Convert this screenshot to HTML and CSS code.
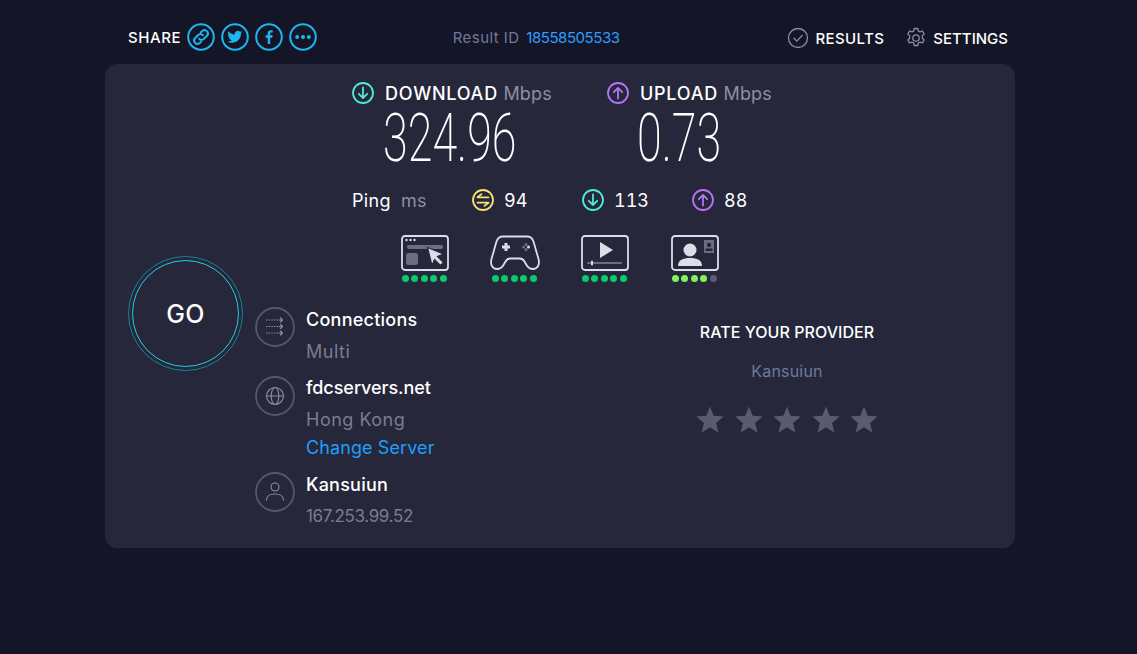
FILE: index.html
```html
<!DOCTYPE html>
<html lang="en">
<head>
<meta charset="utf-8">
<title>Speedtest result</title>
<link rel="stylesheet" href="styles.css">
</head>
<body>
<div class="page">
  <header class="topbar">
    <div class="share">
      <span class="share-label">SHARE</span>
      <span class="share-icon"><svg viewBox="0 0 28 28"><circle cx="14" cy="14" r="12.8" class="s-blue"/><path d="M12.2 15.8a3.4 3.4 0 0 0 4.8 0l3-3a3.4 3.4 0 0 0-4.8-4.8l-1.4 1.4M15.8 12.2a3.4 3.4 0 0 0-4.8 0l-3 3a3.4 3.4 0 0 0 4.8 4.8l1.4-1.4" class="s-blue"/></svg></span>
      <span class="share-icon"><svg viewBox="0 0 28 28"><circle cx="14" cy="14" r="12.8" class="s-blue"/><path d="M21.5 9.2c-.6.3-1.2.4-1.8.5.6-.4 1.1-1 1.3-1.7-.6.4-1.300.6-2 .8a3.100 3.100 0 0 0-5.300 2.800c-2.600-.1-4.900-1.400-6.400-3.300-.8 1.400-.4 3.200 1 4.100-.5 0-1-.2-1.400-.4 0 1.500 1.100 2.800 2.500 3.100-.5.1-.9.1-1.400 0 .4 1.200 1.500 2.100 2.900 2.100a6.300 6.300 0 0 1-4.600 1.300c4.600 2.900 13.800 1 13.800-8.400.6-.4 1-.9 1.400-1.400z" class="f-blue"/></svg></span>
      <span class="share-icon"><svg viewBox="0 0 28 28"><circle cx="14" cy="14" r="12.8" class="s-blue"/><path d="M15.200 21v-6.300h2.100l.3-2.400h-2.400v-1.500c0-.7.200-1.200 1.200-1.200h1.300V7.400c-.2 0-1-.1-1.900-.1-1.900 0-3.100 1.100-3.100 3.200v1.800h-2.100v2.400h2.100V21z" class="f-blue"/></svg></span>
      <span class="share-icon"><svg viewBox="0 0 28 28"><circle cx="14" cy="14" r="12.8" class="s-blue"/><circle cx="8.200" cy="14" r="2" class="f-blue"/><circle cx="14" cy="14" r="2" class="f-blue"/><circle cx="19.800" cy="14" r="2" class="f-blue"/></svg></span>
    </div>
    <div class="result-id">Result ID <a class="result-link">18558505533</a></div>
    <nav class="nav">
      <span class="nav-item nav-results"><svg class="nav-icon" viewBox="0 0 22 22"><circle cx="11" cy="11" r="9.500" class="s-grey"/><path d="M7 11.300l2.800 2.800 5.400-5.600" class="s-grey"/></svg>RESULTS</span>
      <span class="nav-item"><svg class="nav-icon" viewBox="0 0 22 22"><circle cx="11" cy="11" r="3.200" class="s-grey"/><path d="M9.200 1.500h3.600l.5 2.500 1.700.9 2.400-.9 1.800 3.100-1.900 1.600v2.600l1.900 1.600-1.800 3.100-2.400-.9-1.700.9-.5 2.500H9.200l-.5-2.500-1.700-.9-2.400.9-1.800-3.100 1.900-1.600V8.700L2.800 7.100l1.800-3.100 2.400.9 1.700-.9z" class="s-grey s-round"/></svg>SETTINGS</span>
    </nav>
  </header>

  <main class="card">
    <div class="go-col">
      <button class="go"><span class="go-inner">GO</span></button>
    </div>
    <div class="content">
      <section class="top">
        <div class="speeds">
          <div class="speed speed-down">
            <div class="speed-head"><svg class="ico22" viewBox="0 0 22 22"><circle cx="11" cy="11" r="10" class="s-teal"/><path d="M11 5.500v10.500M6.800 11.800l4.200 4.200 4.200-4.200" class="s-teal"/></svg><span class="speed-label">DOWNLOAD</span><span class="unit">Mbps</span></div>
            <div class="number"><span class="number-text">324.96</span></div>
          </div>
          <div class="speed speed-up">
            <div class="speed-head"><svg class="ico22" viewBox="0 0 22 22"><circle cx="11" cy="11" r="10" class="s-purple"/><path d="M11 16.500V6M6.800 10.200L11 6l4.200 4.200" class="s-purple"/></svg><span class="speed-label">UPLOAD</span><span class="unit">Mbps</span></div>
            <div class="number"><span class="number-text">0.73</span></div>
          </div>
        </div>
        <div class="ping">
          <span class="ping-label">Ping</span><span class="ping-unit">ms</span>
          <span class="ping-val ping-a"><svg class="ico22" viewBox="0 0 22 22"><circle cx="11" cy="11" r="10" class="s-yellow"/><path d="M16.500 8.300H5.500l4-3.200M5.500 13.700h11l-4 3.200" class="s-yellow"/></svg>94</span>
          <span class="ping-val ping-b"><svg class="ico22" viewBox="0 0 22 22"><circle cx="11" cy="11" r="10" class="s-teal"/><path d="M11 5.500v10.500M6.800 11.800l4.200 4.200 4.200-4.200" class="s-teal"/></svg>113</span>
          <span class="ping-val ping-c"><svg class="ico22" viewBox="0 0 22 22"><circle cx="11" cy="11" r="10" class="s-purple"/><path d="M11 16.500V6M6.800 10.200L11 6l4.200 4.200" class="s-purple"/></svg>88</span>
        </div>
        <div class="quality">
          <div class="q">
            <svg class="q-icon" viewBox="0 0 50 36"><rect x="2" y="1" width="46" height="34" rx="3" class="s-pale"/><circle cx="6.500" cy="5" r="1.200" class="f-pale"/><circle cx="10.500" cy="5" r="1.200" class="f-pale"/><circle cx="14.500" cy="5" r="1.200" class="f-pale"/><rect x="7" y="10" width="36" height="4" rx="2" class="f-dim"/><rect x="6" y="18" width="12" height="12" rx="2.500" class="f-dim"/><path d="M27.500 12.500l16 6.500-6 2.500 6 6-3 3-6-6-2.500 6z" class="f-pale s-bg"/></svg>
            <div class="dots"><i class="dot on"></i><i class="dot on"></i><i class="dot on"></i><i class="dot on"></i><i class="dot on"></i></div>
          </div>
          <div class="q">
            <svg class="q-icon" viewBox="0 0 50 36"><path d="M13 1.500h24c3.500 0 5.500 1.800 6.500 5l5 17.500c1.500 5.500-1 10-5.500 10-3 0-5-1.500-6.500-4l-2-3.500c-1.200-2-2.500-3-4.500-3H20c-2 0-3.300 1-4.500 3l-2 3.500c-1.500 2.500-3.500 4-6.500 4-4.500 0-7-4.500-5.500-10l5-17.500c1-3.200 3-5 6.500-5z" class="s-pale"/><path d="M16 8v8M12 12h8" class="s-pale s-thick"/><circle cx="36" cy="9.500" r="1.500" class="f-dim"/><circle cx="36" cy="14.500" r="1.500" class="f-dim"/><circle cx="33.500" cy="12" r="1.500" class="f-dim"/><circle cx="38.500" cy="12" r="1.500" class="f-pale"/></svg>
            <div class="dots"><i class="dot on"></i><i class="dot on"></i><i class="dot on"></i><i class="dot on"></i><i class="dot on"></i></div>
          </div>
          <div class="q">
            <svg class="q-icon" viewBox="0 0 50 36"><rect x="2" y="1" width="46" height="34" rx="3" class="s-pale"/><path d="M20 7l13 8-13 8z" class="f-pale"/><rect x="7" y="27" width="35" height="2" rx="1" class="f-dim"/><rect x="11" y="25.500" width="2" height="5" rx="1" class="f-pale"/></svg>
            <div class="dots"><i class="dot on"></i><i class="dot on"></i><i class="dot on"></i><i class="dot on"></i><i class="dot on"></i></div>
          </div>
          <div class="q">
            <svg class="q-icon" viewBox="0 0 50 36"><rect x="2" y="1" width="46" height="34" rx="3" class="s-pale"/><circle cx="20" cy="15" r="6.500" class="f-pale"/><path d="M8 31c0-6 5-8 12-8s12 2 12 8z" class="f-pale"/><rect x="34" y="5" width="10" height="13" class="f-dim"/><circle cx="39" cy="10" r="2.200" class="f-bg"/><rect x="35.500" y="13.500" width="7" height="2.500" class="f-bg"/></svg>
            <div class="dots"><i class="dot lime"></i><i class="dot lime"></i><i class="dot lime"></i><i class="dot lime"></i><i class="dot off"></i></div>
          </div>
        </div>
      </section>
      <section class="bottom">
        <div class="details">
          <div class="detail">
            <span class="d-icon"><svg viewBox="0 0 40 40"><circle cx="20" cy="20" r="19" class="s-ring"/><path d="M11 13h12M11 19.500h12M11 26h12" class="s-dash"/><path d="M24 13h3.500M25.500 11l2 2-2 2M24 19.500h3.500M25.500 17.500l2 2-2 2M24 26h3.500M25.500 24l2 2-2 2" class="s-thin"/></svg></span>
            <div class="d-text"><div class="d-title">Connections</div><div class="d-sub">Multi</div></div>
          </div>
          <div class="detail">
            <span class="d-icon"><svg viewBox="0 0 40 40"><circle cx="20" cy="20" r="19" class="s-ring"/><circle cx="20" cy="20" r="8.500" class="s-thin"/><ellipse cx="20" cy="20" rx="3.800" ry="8.500" class="s-thin"/><path d="M11.500 20h17" class="s-thin"/></svg></span>
            <div class="d-text"><div class="d-title d-title-tight">fdcservers.net</div><div class="d-sub">Hong Kong</div><a class="d-link">Change Server</a></div>
          </div>
          <div class="detail">
            <span class="d-icon"><svg viewBox="0 0 40 40"><circle cx="20" cy="20" r="19" class="s-ring"/><circle cx="20" cy="15" r="4" class="s-thin"/><path d="M11.500 28c0-4 4-6 8.500-6s8.500 2 8.500 6" class="s-thin"/></svg></span>
            <div class="d-text"><div class="d-title">Kansuiun</div><div class="d-sub d-ip">167.253.99.52</div></div>
          </div>
        </div>
        <aside class="rate">
          <div class="rate-title">RATE YOUR PROVIDER</div>
          <div class="rate-name">Kansuiun</div>
          <div class="stars">
            <svg class="star" viewBox="0 0 28 28"><path d="M14 .5l3.700 9.300 10 .7-7.700 6.400 2.500 9.800L14 21.300l-8.500 5.400L8 16.900.3 10.500l10-.7z"/></svg>
            <svg class="star" viewBox="0 0 28 28"><path d="M14 .5l3.700 9.300 10 .7-7.700 6.400 2.500 9.800L14 21.300l-8.500 5.400L8 16.900.3 10.500l10-.7z"/></svg>
            <svg class="star" viewBox="0 0 28 28"><path d="M14 .5l3.700 9.300 10 .7-7.700 6.400 2.500 9.800L14 21.300l-8.500 5.400L8 16.900.3 10.500l10-.7z"/></svg>
            <svg class="star" viewBox="0 0 28 28"><path d="M14 .5l3.700 9.300 10 .7-7.700 6.400 2.500 9.800L14 21.300l-8.500 5.400L8 16.900.3 10.500l10-.7z"/></svg>
            <svg class="star" viewBox="0 0 28 28"><path d="M14 .5l3.700 9.300 10 .7-7.700 6.400 2.500 9.800L14 21.300l-8.500 5.400L8 16.900.3 10.500l10-.7z"/></svg>
          </div>
        </aside>
      </section>
    </div>
  </main>
</div>
</body>
</html>
```

FILE: styles.css
```css
* { box-sizing: border-box; }
html, body { margin: 0; height: 100%; }
body {
  background: #141526;
  color: #fff;
  font-family: "Inter", "Noto Sans", "Liberation Sans", sans-serif;
  overflow: hidden;
}
.page { width: 910px; margin-left: 105px; }

/* top bar */
.topbar { height: 64px; display: flex; align-items: center; padding: 10px 7px 0 23px; }
.share { display: flex; align-items: center; width: 325px; }
.share-label { font-size: 15px; font-weight: 500; width: 59px; letter-spacing: .6px; }
.share-icon { width: 34px; height: 28px; display: block; }
.share-icon svg { width: 28px; height: 28px; display: block; }
.s-blue { fill: none; stroke: #1cb6f0; stroke-width: 2; stroke-linecap: round; }
.f-blue { fill: #1cb6f0; stroke: none; }
.result-id { font-size: 15px; color: #6f7a9c; width: 335px; letter-spacing: .45px; }
.result-link { color: #2e9fff; letter-spacing: -.45px; margin-left: 2px; }
.nav { display: flex; align-items: center; gap: 21px; padding-top: 2px; }
.nav-item { display: flex; align-items: center; gap: 6px; font-size: 15px; font-weight: 500; }
.nav-results { letter-spacing: .4px; }
.nav-icon { width: 22px; height: 22px; display: block; margin-top: -1px; }
.s-grey { fill: none; stroke: #8d8ea0; stroke-width: 1.300; stroke-linecap: round; stroke-linejoin: round; }

/* card */
.card { display: flex; height: 484px; background: #26273b; border-radius: 12px; }
.go-col { width: 150px; padding: 192px 0 0 23px; flex: none; }
.go {
  width: 115px; height: 115px; padding: 3px; display: block;
  border: 1.500px solid #1a8298; border-radius: 50%; background: none;
}
.go-inner {
  display: flex; align-items: center; justify-content: center;
  width: 100%; height: 100%; border: 1.500px solid #1fd0e4; border-radius: 50%;
  color: #fff; font: 500 25px "Inter", sans-serif; letter-spacing: .3px; padding-top: 1px;
}
.content { flex: 1; }

.top { height: 224px; padding: 17px 0 0 97px; }
.speeds { display: flex; }
.speed { width: 255px; }
.speed-head { display: flex; align-items: center; height: 24px; font-size: 18px; }
.speed-head .ico22 { margin-right: 11px; }
.speed-label { font-weight: 500; letter-spacing: .75px; }
.unit { margin-left: 5.500px; color: #8d8ea6; font-size: 18px; letter-spacing: .2px; }
.ico22 { width: 22px; height: 22px; display: block; flex: none; }
.s-teal, .s-purple, .s-yellow { fill: none; stroke-width: 1.800; stroke-linecap: round; stroke-linejoin: round; }
.s-teal { stroke: #4fe9d6; }
.s-purple { stroke: #b674f5; }
.s-yellow { stroke: #f5e272; }
.number { height: 69px; margin-left: 31px; white-space: nowrap; line-height: 68px; }
.speed-up .number { margin-left: 30px; }
.number-text {
  display: inline-block; font: 200 66px/68px "Roboto", sans-serif;
  transform: scaleX(.68); transform-origin: 0 50%;
}

.ping { display: flex; align-items: center; height: 24px; margin-top: 14px; font-size: 18px; }
.ping-label { width: 49px; letter-spacing: .3px; }
.ping-unit { width: 71px; color: #8d8ea6; letter-spacing: .3px; }
.ping-val { display: flex; align-items: center; gap: 10px; width: 110px; font-variant-numeric: tabular-nums; }

.quality { display: flex; margin-top: 23px; margin-left: 48px; }
.q { width: 90px; }
.q-icon { width: 50px; height: 36px; display: block; }
.s-pale { fill: none; stroke: #dcdde8; stroke-width: 1.800; stroke-linejoin: round; }
.s-thick { stroke-width: 3; }
.f-pale { fill: #dcdde8; }
.f-dim { fill: #6c6d80; }
.f-bg { fill: #26273b; }
.s-bg { stroke: #26273b; stroke-width: 1.200; }
.dots { display: flex; gap: 2.400px; margin: 4px 0 0 2px; }
.dot { width: 7px; height: 7px; border-radius: 50%; display: block; }
.dot.on { background: #0acb6c; }
.dot.lime { background: #7ff35f; }
.dot.off { background: #5c5d70; }

/* bottom */
.bottom { display: flex; }
.details { width: 360px; padding-top: 19px; }
.detail { display: flex; }
.detail:first-child { height: 69px; }
.detail:first-child .d-text, .detail:last-child .d-text { padding-top: 1px; }
.d-icon { width: 40px; height: 40px; margin: 0 11px 0 0; display: block; flex: none; }
.d-icon svg { width: 40px; height: 40px; display: block; }
.s-ring { fill: none; stroke: #565768; stroke-width: 1.800; }
.s-thin { fill: none; stroke: #8d8ea0; stroke-width: 1.100; stroke-linecap: round; stroke-linejoin: round; }
.s-dash { fill: none; stroke: #8d8ea0; stroke-width: 1.100; stroke-dasharray: 1.500 1.200; }
.d-title { font-size: 18px; font-weight: 500; line-height: 24px; height: 32px; letter-spacing: .25px; }
.d-title-tight { letter-spacing: -.05px; }
.d-sub { font-size: 18px; color: #7b7c90; line-height: 24px; height: 37px; letter-spacing: .5px; }
.d-ip { font-size: 17px; letter-spacing: -.35px; margin-top: -1px; }
.d-link { display: block; font-size: 18px; color: #1c9fff; line-height: 24px; height: 36px; margin-top: -9px; letter-spacing: .1px; }

.rate { width: 200px; margin-left: 72px; display: flex; flex-direction: column; align-items: center; padding-top: 34px; }
.rate-title { font-size: 16px; font-weight: 500; line-height: 20px; white-space: nowrap; letter-spacing: .05px; }
.rate-name { font-size: 16px; color: #6f7a9c; margin-top: 19px; line-height: 20px; letter-spacing: .2px; }
.stars { display: flex; gap: 10.500px; margin-top: 25px; }
.star { width: 28px; height: 28px; display: block; fill: #5a5b6e; }
```
